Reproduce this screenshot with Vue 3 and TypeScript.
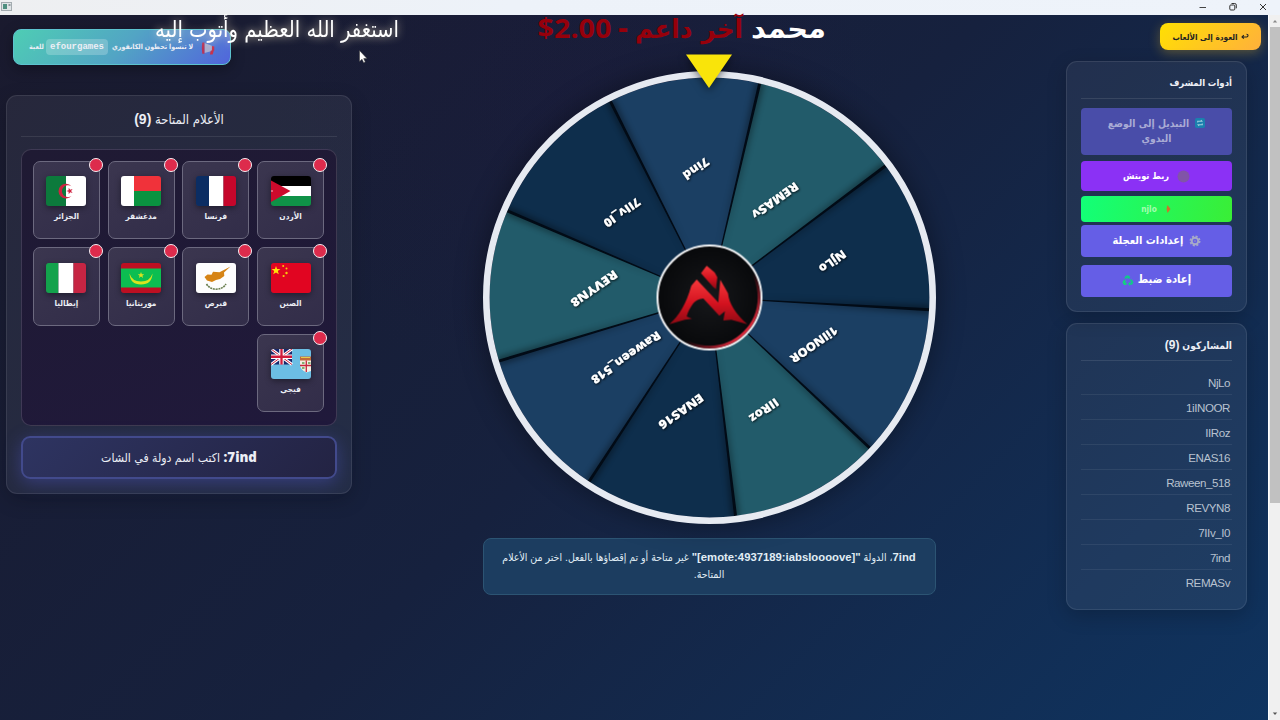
<script setup lang="ts">
interface Segment {
  name: string
  x: number
  y: number
  width: number
}

interface Country {
  code: string
  label: string
}

const WHEEL_OFFSET = 13.2
const STEP = 40
const RADIUS = 220
const palette: string[] = ['#225b6a', '#0e2e4c', '#1b3f63']

const segments: Segment[] = [
  { name: 'REMASv', x: 65.5, y: -97, width: 54 },
  { name: 'NjLo', x: 123, y: -36, width: 30 },
  { name: '1iINOOR', x: 104.5, y: 47, width: 55 },
  { name: 'IIRoz', x: 54.5, y: 113, width: 33 },
  { name: 'ENAS16', x: -28.5, y: 114, width: 52 },
  { name: 'Raween_518', x: -83.5, y: 60, width: 82 },
  { name: 'REVYN8', x: -115.5, y: -9, width: 54 },
  { name: '7IIv_I0', x: -87.5, y: -85, width: 42 },
  { name: '7ind', x: -13.5, y: -129, width: 29 },
]

function point(angle: number, radius: number): string {
  const rad = (angle * Math.PI) / 180
  return `${(Math.sin(rad) * radius).toFixed(2)} ${(-Math.cos(rad) * radius).toFixed(2)}`
}

function slicePath(index: number): string {
  const start = WHEEL_OFFSET + index * STEP
  return `M0 0L${point(start, RADIUS)}A${RADIUS} ${RADIUS} 0 0 1 ${point(start + STEP, RADIUS)}Z`
}

const countries: Country[] = [
  { code: 'jo', label: 'الأردن' },
  { code: 'fr', label: 'فرنسا' },
  { code: 'mg', label: 'مدغشقر' },
  { code: 'dz', label: 'الجزائر' },
  { code: 'cn', label: 'الصين' },
  { code: 'cy', label: 'قبرص' },
  { code: 'mr', label: 'موريتانيا' },
  { code: 'it', label: 'إيطاليا' },
  { code: 'fj', label: 'فيجي' },
]

const players: string[] = ['NjLo', '1iINOOR', 'IIRoz', 'ENAS16', 'Raween_518', 'REVYN8', '7IIv_I0', '7ind', 'REMASv']
</script>

<template>
  <div class="window">
    <header class="titlebar">
      <svg class="app-icon" width="12" height="10" viewBox="0 0 12 10">
        <rect x="0.5" y="0.5" width="10" height="8" fill="#dfe4e6" stroke="#a3abb0" />
        <rect x="2" y="2" width="4" height="5" fill="#4f8f80" />
        <path d="M7.500 2h2v2h-2z" fill="#8f999f" />
      </svg>
      <div class="controls">
        <svg width="10" height="10" viewBox="0 0 10 10"><path d="M1.500 5.500H8" stroke="#444" /></svg>
        <svg width="10" height="10" viewBox="0 0 10 10">
          <rect x="1.800" y="3" width="5" height="5" rx="1" fill="none" stroke="#333" />
          <path d="M3.500 1.500h3.200q1.600 0 1.600 1.600v3.200" fill="none" stroke="#333" />
        </svg>
        <svg width="10" height="10" viewBox="0 0 10 10"><path d="M2 2l6 6M8 2l-6 6" stroke="#333" /></svg>
      </div>
    </header>

    <div class="viewport">
      <main class="page">
        <section class="col-left">
          <div class="promo" dir="rtl">
            <svg class="horn" width="14" height="13" viewBox="0 0 14 13">
              <path d="M0.500 4.500L3 4v5L0.500 8.500z" fill="#c9324c" />
              <path d="M3 3.800L10.500 1v10L3 9z" fill="#a9aed0" />
              <path d="M10.500 0.500h2.200q1 5.700 0 11.300h-2.200z" fill="#b83358" />
              <path d="M1 8.500h3l1 4H2.200z" fill="#c9324c" />
            </svg>
            <span class="promo-text">لا تنسوا تحطون الكانفوري</span>
            <code class="chip" dir="ltr">efourgames</code>
            <span class="promo-end">للعبة</span>
          </div>

          <div class="panel flags-panel" dir="rtl">
            <h2 class="flags-title">الأعلام المتاحة <b>(9)</b></h2>
            <div class="flag-box">
              <div v-for="c in countries" :key="c.code" class="flag-card">
                <span class="dot"></span>
                <svg class="flag" width="40" height="30" viewBox="0 0 40 30">
                  <template v-if="c.code === 'jo'">
                    <path d="M0 0h40v10H0z" fill="#000" />
                    <path d="M0 10h40v10H0z" fill="#fff" />
                    <path d="M0 20h40v10H0z" fill="#0f9247" />
                    <path d="M0 4.500L19.500 15 0 26z" fill="#cd0a2c" />
                    <circle cx="1" cy="15" r="0.700" fill="#fff" />
                  </template>
                  <template v-else-if="c.code === 'fr'">
                    <path d="M0 0h13v30H0z" fill="#0b2d63" />
                    <path d="M13 0h14.500v30H13z" fill="#fff" />
                    <path d="M27.500 0H40v30H27.500z" fill="#c5062b" />
                  </template>
                  <template v-else-if="c.code === 'mg'">
                    <path d="M0 0h13v30H0z" fill="#fff" />
                    <path d="M13 0h27v15H13z" fill="#f0323a" />
                    <path d="M13 15h27v15H13z" fill="#0a9340" />
                  </template>
                  <template v-else-if="c.code === 'dz'">
                    <path d="M0 0h20v30H0z" fill="#0c7a3c" />
                    <path d="M20 0h20v30H20z" fill="#fff" />
                    <path d="M25.500 10.300a7.400 7.400 0 1 0 0 9.700a6 6 0 1 1 0-9.700z" fill="#cf2340" />
                    <path d="M20.200 15l2.400-.8.1-2.500 1.500 2 2.400-.7-1.500 2 1.500 2-2.400-.7-1.500 2-.1-2.500z" fill="#cf2340" />
                  </template>
                  <template v-else-if="c.code === 'cn'">
                    <path d="M0 0h40v30H0z" fill="#e10521" />
                    <path d="M5 3l1.100 3.100h3.300L6.800 8.100l1 3.200L5 9.400l-2.800 1.900 1-3.200L.6 6.100h3.300z" fill="#ffe10a" />
                    <g fill="#f6c90c">
                      <circle cx="12.200" cy="3" r="1" /><circle cx="15.500" cy="5.500" r="1" />
                      <circle cx="15.500" cy="10" r="1.200" /><circle cx="12.600" cy="13" r="1.100" />
                    </g>
                  </template>
                  <template v-else-if="c.code === 'cy'">
                    <path d="M0 0h40v30H0z" fill="#fdfdfd" />
                    <path d="M8.500 14l3-2.500 4 .3 1.500-3 6.500.5L34.500 3.500 28 9.500l.3 3.500-4.300 3-4 1-4 2-5-1.500z" fill="#d68416" />
                    <path d="M10.500 21q3 5 9.500 5.200Q27 26 30 21" fill="none" stroke="#6a7f50" stroke-width="1.600" stroke-dasharray="2 .7" />
                  </template>
                  <template v-else-if="c.code === 'mr'">
                    <path d="M0 0h40v30H0z" fill="#bd0f22" />
                    <path d="M0 5.500h40v19H0z" fill="#0cbe51" />
                    <path d="M8.500 10.500q2.500 8 11.500 8t11.500-8q-.5 11-11.500 11t-11.500-11z" fill="#d9e31f" />
                    <path d="M20 9l.9 2.200h2.300l-1.800 1.500.7 2.300-2.100-1.400-2.100 1.400.7-2.300-1.800-1.500h2.300z" fill="#d9e31f" />
                  </template>
                  <template v-else-if="c.code === 'it'">
                    <path d="M0 0h12.500v30H0z" fill="#13a24c" />
                    <path d="M12.500 0h15v30h-15z" fill="#fff" />
                    <path d="M27.500 0H40v30H27.500z" fill="#c62543" />
                  </template>
                  <template v-else>
                    <path d="M0 0h40v30H0z" fill="#6cbee4" />
                    <path d="M0 0h21v15.500H0z" fill="#17286d" />
                    <path d="M0 0l21 15.500M21 0L0 15.500" stroke="#fff" stroke-width="3" />
                    <path d="M0 0l21 15.500M21 0L0 15.500" stroke="#cf2340" stroke-width="1" />
                    <path d="M10.500 0v15.500M0 7.750h21" stroke="#fff" stroke-width="4.500" />
                    <path d="M10.500 0v15.500M0 7.750h21" stroke="#cf1b3c" stroke-width="2.300" />
                    <path d="M29 10.500h11V22l-4.500 1.500Q29 21 29 15z" fill="#f4eee2" />
                    <path d="M29 7.500h11v4H29z" fill="#c46a3a" />
                    <path d="M30 8.500h9" stroke="#e8cb4b" />
                    <path d="M35.300 11.500V23M29 16.500h11" stroke="#c7263d" stroke-width="1.300" />
                    <path d="M31 14h2.500M37 14h2.500M31 19h2.500" stroke="#5d9a4c" stroke-width="1.300" />
                  </template>
                </svg>
                <span class="flag-name">{{ c.label }}</span>
              </div>
            </div>
            <div class="prompt"><b>7ind:</b> اكتب اسم دولة في الشات</div>
          </div>
        </section>

        <section class="col-center">
          <div class="wheel-wrap">
            <svg class="wheel" width="453" height="453" viewBox="-226.500 -226.500 453 453">
              <defs>
                <filter id="soft" x="-400%" y="-20%" width="900%" height="140%">
                  <feGaussianBlur stdDeviation="3.500" />
                </filter>
                <filter id="label-shadow" x="-20%" y="-60%" width="140%" height="220%">
                  <feDropShadow dx="0.800" dy="0.800" stdDeviation="1" flood-color="#000" flood-opacity="0.900" />
                </filter>
                <clipPath id="disc"><circle r="220" /></clipPath>
                <linearGradient id="flame" x1="0" y1="0" x2="0" y2="1">
                  <stop offset="0" stop-color="#f5383b" />
                  <stop offset="0.550" stop-color="#d3121f" />
                  <stop offset="1" stop-color="#8d0a14" />
                </linearGradient>
                <linearGradient id="edge" x1="0" y1="0" x2="1" y2="1">
                  <stop offset="0.600" stop-color="#b01022" stop-opacity="0" />
                  <stop offset="0.850" stop-color="#d92a3c" />
                </linearGradient>
                <radialGradient id="hub"><stop offset="0" stop-color="#17181b" /><stop offset="1" stop-color="#08090b" /></radialGradient>
              </defs>
              <g clip-path="url(#disc)">
                <path v-for="(s, i) in segments" :key="s.name" :d="slicePath(i)" :fill="palette[i % 3]" />
                <g v-for="(s, i) in segments" :key="'l' + s.name" :transform="`rotate(${WHEEL_OFFSET + i * STEP})`">
                  <path d="M0 -40L-2.800 -222H2.800z" fill="#000" opacity="0.600" filter="url(#soft)" />
                  <path d="M-.4 0L-1.500 -222H1.500L.4 0z" fill="#020b16" />
                </g>
              </g>
              <circle r="223.200" fill="none" stroke="#e6eaf1" stroke-width="6.600" />
              <g class="labels" filter="url(#label-shadow)">
                <text
                  v-for="s in segments"
                  :key="'t' + s.name"
                  :transform="`translate(${s.x} ${s.y}) rotate(145)`"
                  :textLength="s.width"
                  lengthAdjust="spacingAndGlyphs"
                  y="4.300"
                >{{ s.name }}</text>
              </g>
              <circle r="52" fill="url(#hub)" stroke="#f3f4f6" stroke-width="2" />
              <circle r="49.500" fill="none" stroke="url(#edge)" stroke-width="2.600" />
              <g transform="translate(-45.500 -37) scale(.33333)">
                <path
                  d="M98 57L163 126L169 58L192 98Q197 145 250 191L202 178L178 180L183 152L166 166L118 114Q98 116 88 128Q72 150 68 168L84 175L62 178L16 191Q60 155 82 76z"
                  fill="url(#flame)"
                />
                <path d="M128 16L152 36L160 50L156 86L147 79L111 38z" fill="url(#flame)" />
              </g>
            </svg>
            <svg class="pointer" width="48" height="36" viewBox="0 0 48 36"><path d="M1 0.500H47L24 34z" fill="#f9e40a" /></svg>
          </div>
          <div class="message" dir="rtl">
            <span class="line line-one"><b>7ind</b>، الدولة <b>"[emote:4937189:iabsloooove]"</b> غير متاحة أو تم إقصاؤها بالفعل. اختر من الأعلام</span>
            <span class="line">المتاحة.</span>
          </div>
        </section>

        <aside class="col-right">
          <button class="back" dir="rtl">
            <svg width="8" height="7" viewBox="0 0 8 7"><path d="M1 4H5.500Q7 4 7 2.600T5.500 1.300M2.800 2.200L1 4l1.800 1.700" fill="none" stroke="#222" stroke-width="1.100" /></svg>
            <span>العودة إلى الألعاب</span>
          </button>

          <div class="panel tools" dir="rtl">
            <h3 class="tools-title">أدوات المشرف</h3>
            <button class="btn mode">
              <span class="row">
                <svg width="10" height="10" viewBox="0 0 11 11">
                  <rect width="11" height="11" rx="2" fill="#1b80ae" />
                  <path d="M3 5V3.500h4.500L6.500 2.300M8 6v1.500H3.500l1 1.200" fill="none" stroke="#9fd0e0" stroke-width="1.200" />
                </svg>
                <span>التبديل إلى الوضع</span>
              </span>
              <span>اليدوي</span>
            </button>
            <button class="btn twitch">
              <svg width="13" height="13" viewBox="0 0 13 13"><circle cx="6.500" cy="6.500" r="6" fill="#8154a8" /></svg>
              <span>ربط تويتش</span>
            </button>
            <button class="btn account">
              <svg width="7" height="8" viewBox="0 0 7 8"><path d="M2.500 0L5.500 4 2.500 8 1.500 4z" fill="#d0722c" /></svg>
              <span>njlo</span>
            </button>
            <button class="btn settings">
              <svg width="12" height="12" viewBox="-6 -6 12 12">
                <circle r="4.700" fill="none" stroke="#a6a9c8" stroke-width="1.600" stroke-dasharray="2.100 1.590" />
                <circle r="3.300" fill="none" stroke="#a6a9c8" stroke-width="2" />
                <circle r="1.100" fill="#8583cc" />
              </svg>
              <span>إعدادات العجلة</span>
            </button>
            <button class="btn reset">
              <span>إعادة ضبط</span>
              <svg width="12" height="11" viewBox="0 0 12 11">
                <path d="M4 .5h3L8.500 3 6 4 5.300 2.500 3.800 4 2.300 3z" fill="#12c98a" />
                <path d="M2 4.500L4 6 3 7.800h1.500V10H2L.4 7.500z" fill="#12d47c" />
                <path d="M9.500 4l2 3.200-1.300 2.500H8V11L6 8.800 8 6.800v1.200h1L8 5z" fill="#12c98a" />
              </svg>
            </button>
          </div>

          <div class="panel players" dir="rtl">
            <h3>المشاركون <b>(9)</b></h3>
            <ul>
              <li v-for="p in players" :key="p">{{ p }}</li>
            </ul>
          </div>
        </aside>
      </main>

      <div class="scrollbar">
        <svg width="10" height="12" viewBox="0 0 10 12"><path d="M2.800 7.500L5 5l2.200 2.500z" fill="#8a8a8a" /></svg>
        <div class="thumb"></div>
        <svg class="down" width="10" height="12" viewBox="0 0 10 12"><path d="M2.800 4.500L5 7l2.200-2.500z" fill="#555" /></svg>
      </div>
    </div>

    <!-- stream overlays floating above the window -->
    <svg class="overlay" width="1280" height="80" viewBox="0 0 1280 80">
      <text class="prayer" x="277" y="37" direction="rtl" textLength="244" lengthAdjust="spacingAndGlyphs">استغفر الله العظيم وأتوب إليه</text>
      <text class="donor" x="788.500" y="38" direction="rtl" textLength="75" lengthAdjust="spacingAndGlyphs">محمد</text>
      <text class="support" x="689" y="38" direction="rtl" textLength="108" lengthAdjust="spacingAndGlyphs">آخر داعم</text>
      <text class="support" x="623" y="38" textLength="11" lengthAdjust="spacingAndGlyphs">-</text>
      <text class="amount" x="574.500" y="38" textLength="74" lengthAdjust="spacingAndGlyphs">$2.00</text>
      <path d="M359.500 50.500v11l2.500-2.300 1.700 3.600 1.600-.8-1.600-3.400h3.300z" fill="#fff" stroke="#333" stroke-width=".5" />
    </svg>
  </div>
</template>

<style>
body {
  overflow: hidden;
}
</style>

<style scoped>
* {
  box-sizing: border-box;
}

.window {
  position: relative;
  display: flex;
  flex-direction: column;
  width: 1280px;
  height: 720px;
  font-family: "Liberation Sans", "DejaVu Sans Condensed", "DejaVu Sans", sans-serif;
  color: #eceef5;
}

.titlebar {
  display: flex;
  justify-content: space-between;
  align-items: flex-start;
  flex: none;
  height: 15px;
  padding: 2px 12px 0 1px;
  background: linear-gradient(90deg, #eeeff1, #edf2f9 40%, #eef3fa);
}

.controls {
  display: flex;
  gap: 20px;
}

.viewport {
  display: flex;
  flex: 1;
  min-height: 0;
}

.page {
  display: flex;
  width: 1268px;
  background:
    radial-gradient(circle at 46% 12%, rgba(40, 16, 70, 0.12), transparent 34%),
    linear-gradient(135deg, #1a1a2e 0%, #16213e 50%, #0f3460 100%);
}

.panel {
  border: 1px solid rgba(255, 255, 255, 0.09);
  border-radius: 11px;
  background: rgba(255, 255, 255, 0.06);
  box-shadow: 0 6px 20px rgba(0, 0, 0, 0.2);
}

/* left column */
.col-left {
  display: flex;
  flex-direction: column;
  gap: 30px;
  width: 352px;
  padding: 14px 0 0 6px;
}

.promo {
  display: flex;
  align-items: center;
  width: 218px;
  height: 36px;
  margin-left: 7px;
  padding: 0 15px 1px;
  border: 1px solid #5cc3cf;
  border-radius: 8px;
  background: linear-gradient(135deg, #4ecdb4, #52a5c4 50%, #5165dc);
  box-shadow: 0 4px 14px rgba(0, 0, 0, 0.3);
  font-size: 8px;
  font-weight: 700;
  white-space: nowrap;
}

.horn {
  margin: 3px 0 0 8px;
  transform: scaleX(-1);
}

.promo-text {
  width: 83px;
  font-size: 7px;
}

.chip {
  margin: 0 3px 0 2px;
  width: 63px;
  height: 16px;
  border-radius: 4px;
  background: rgba(255, 255, 255, 0.22);
  font: 700 9px/16px "Liberation Mono", monospace;
  text-align: center;
}

.promo-end {
  font-size: 7px;
}

.flags-panel {
  width: 346px;
  height: 399px;
  padding: 0 14px;
}

.flags-title {
  height: 41px;
  margin: 0 0 12px;
  border-bottom: 1px solid rgba(255, 255, 255, 0.09);
  font-size: 13px;
  font-weight: 400;
  line-height: 46px;
  text-align: center;
}

.flags-title b {
  font-size: 14px;
}

.flag-box {
  display: grid;
  grid-template-columns: repeat(4, 67px);
  grid-auto-rows: 78.500px;
  gap: 8.200px 7.700px;
  height: 277px;
  padding: 10.500px 12px;
  border: 1px solid rgba(255, 255, 255, 0.14);
  border-radius: 10px;
  background: linear-gradient(160deg, #1f1a33, #20193b);
}

.flag-card {
  position: relative;
  display: flex;
  flex-direction: column;
  align-items: center;
  padding-top: 14.500px;
  border: 1.500px solid #6c697f;
  border-radius: 7px;
  background: linear-gradient(145deg, #3b364f, #322d49);
}

.flag {
  border-radius: 3px;
  box-shadow: 0 2px 6px rgba(0, 0, 0, 0.4);
}

.flag-name {
  margin-top: 4px;
  font-size: 8.200px;
  font-weight: 700;
  line-height: 14px;
}

.dot {
  position: absolute;
  top: -4px;
  right: -4px;
  width: 14px;
  height: 14px;
  border: 1.500px solid #f5eef2;
  border-radius: 50%;
  background: #dd2b4c;
}

.prompt {
  height: 43px;
  margin-top: 10px;
  border: 2px solid #424a8c;
  border-radius: 9px;
  background: linear-gradient(135deg, #2e3461, #232343);
  box-shadow: 0 4px 17px rgba(78, 84, 190, 0.45);
  font-size: 12.200px;
  font-weight: 400;
  line-height: 38px;
  text-align: center;
}

.prompt b {
  font-family: "Open Sans", sans-serif;
  font-weight: 800;
  font-size: 13.300px;
}

/* center column */
.col-center {
  display: flex;
  flex-direction: column;
  align-items: center;
  width: 714px;
  padding-top: 56px;
}

.wheel-wrap {
  position: relative;
  width: 453px;
  height: 453px;
  border-radius: 50%;
  box-shadow: 0 0 28px rgba(0, 0, 0, 0.4);
}

.wheel {
  display: block;
}

.labels text {
  fill: #fff;
  font-family: "Open Sans", sans-serif;
  font-size: 12px;
  font-weight: 800;
  text-anchor: middle;
}

.pointer {
  position: absolute;
  top: -17.500px;
  left: 202.500px;
  filter: drop-shadow(0 3px 4px rgba(0, 0, 0, 0.5));
}

.message {
  display: flex;
  flex-direction: column;
  align-items: center;
  width: 453px;
  height: 57px;
  margin-top: 14px;
  padding-top: 9.500px;
  border: 1px solid #2c5473;
  border-radius: 8px;
  background: #1c3d60;
  color: #e0edf5;
  font-size: 10.500px;
  line-height: 17px;
}

.line {
  white-space: nowrap;
}

.line b {
  font-size: 11.300px;
}

/* right column */
.col-right {
  display: flex;
  flex-direction: column;
  width: 202px;
  padding: 8px 7px 0 0;
}

.back {
  display: flex;
  align-items: center;
  align-self: flex-end;
  justify-content: center;
  gap: 3px;
  width: 101px;
  height: 27px;
  margin-bottom: 11px;
  padding: 0;
  border: 0;
  border-radius: 8px;
  background: linear-gradient(135deg, #ffe002, #ffb03c);
  box-shadow: 0 3px 12px rgba(255, 200, 30, 0.3);
  color: #222;
  font: 700 8.200px "DejaVu Sans Condensed", "DejaVu Sans", sans-serif;
  white-space: nowrap;
}

.tools,
.players {
  width: 181px;
  margin-right: 14px;
  padding: 0 14px;
}

.tools {
  display: flex;
  flex-direction: column;
  height: 251px;
}

h3 {
  height: 37px;
  margin: 0;
  border-bottom: 1px solid rgba(255, 255, 255, 0.1);
  font-size: 10.200px;
  line-height: 42px;
  text-align: right;
}

.tools-title {
  font-size: 9.500px;
}

h3 b {
  font-size: 12px;
  letter-spacing: -0.300px;
}

.btn {
  display: flex;
  align-items: center;
  justify-content: center;
  flex: none;
  padding: 0;
  border: 0;
  border-radius: 4px;
  background: #655ee6;
  color: #fff;
  font: 700 10.300px/14.500px "DejaVu Sans Condensed", "DejaVu Sans", sans-serif;
  white-space: nowrap;
}

.mode {
  flex-direction: column;
  height: 47px;
  margin-top: 9px;
  padding-bottom: 2px;
  background: #494da9;
  color: #a9abd5;
}

.row {
  display: flex;
  align-items: center;
  gap: 6px;
}

.twitch {
  gap: 8px;
  height: 30px;
  margin-top: 6px;
  background: #8b31f5;
  font-size: 9.200px;
}

.account {
  gap: 8px;
  height: 26px;
  margin-top: 5px;
  background: linear-gradient(100deg, #12ff78, #3aee36);
  color: #a4fdb0;
  font-size: 8.300px;
}

.settings {
  gap: 5px;
  height: 32px;
  margin-top: 3px;
  font-size: 11px;
}

.reset {
  gap: 4px;
  height: 32px;
  margin-top: 7.500px;
  font-size: 11.200px;
}

.players {
  height: 287px;
  margin-top: 10.500px;
}

.players ul {
  display: flex;
  flex-direction: column;
  margin: 9px 0 0;
  padding: 0;
  list-style: none;
}

.players li {
  height: 25.050px;
  padding: 0 2px;
  border-bottom: 1px solid rgba(255, 255, 255, 0.07);
  color: #b8c2d0;
  font-size: 11.600px;
  letter-spacing: -0.450px;
  line-height: 25px;
}

.players li:last-child {
  border-bottom: 0;
}

/* scrollbar */
.scrollbar {
  display: flex;
  flex-direction: column;
  align-items: center;
  width: 12px;
  border-left: 1px solid #fff;
  background: #f0f0f0;
}

.thumb {
  width: 10px;
  height: 476px;
  background: #c1c1c1;
}

.down {
  margin-top: auto;
}

/* overlays */
.overlay {
  position: absolute;
  top: 0;
  left: 0;
  pointer-events: none;
}

.prayer {
  fill: #fff;
  font-family: "DejaVu Sans Condensed", "DejaVu Sans", sans-serif;
  font-size: 23px;
  text-anchor: middle;
  filter: drop-shadow(0 0 4px rgba(255, 240, 200, 0.7));
}

.donor,
.support,
.amount {
  font-family: "DejaVu Sans", sans-serif;
  font-size: 26px;
  font-weight: 700;
  text-anchor: middle;
}

.donor {
  fill: #fff;
}

.support,
.amount {
  fill: #96000b;
}

.amount {
  font-family: "Open Sans", sans-serif;
}
</style>
